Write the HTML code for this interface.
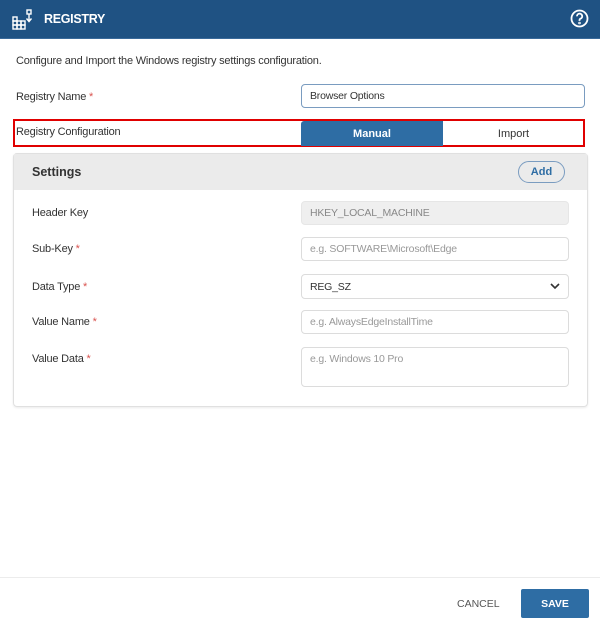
<!DOCTYPE html>
<html><head><style>
*{box-sizing:border-box;margin:0;padding:0}
body{width:600px;height:626px;background:#fff;font-family:"Liberation Sans",sans-serif;font-size:11px;color:#333;position:relative;overflow:hidden}
.a{position:absolute}
.hdr{left:0;top:0;width:600px;height:39px;background:#1f5283;border-bottom:1px solid #3a6a9a}
.lbl{font-size:11px;color:#333;letter-spacing:-0.2px}
.req{color:#d9534f}
.inp{border:1px solid #dcdcdc;border-radius:4px;background:#fff;font-size:10.5px;color:#999;padding-left:8px;display:flex;align-items:center;letter-spacing:-0.2px}
</style></head><body>
<div class="a hdr">
<svg class="a" style="left:11px;top:9px" width="24" height="22" viewBox="0 0 24 22" fill="none" stroke="#fff" stroke-width="1.4">
<rect x="2" y="8" width="4" height="4"/><rect x="2" y="12" width="4" height="4"/><rect x="6" y="12" width="4" height="4"/><rect x="10" y="12" width="4" height="4"/><rect x="2" y="16" width="4" height="4"/><rect x="6" y="16" width="4" height="4"/><rect x="10" y="16" width="4" height="4"/>
<rect x="16" y="1" width="4" height="4"/><path d="M18 5v7M15.5 9.5l2.5 3 2.5-3"/></svg>
<div class="a" style="left:44px;top:12px;color:#fff;font-weight:bold;font-size:12.5px;letter-spacing:-0.3px">REGISTRY</div>
<svg class="a" style="left:570px;top:9px" width="19" height="19" viewBox="0 0 19 19" fill="none" stroke="#fff" stroke-width="1.8"><circle cx="9.5" cy="9.5" r="8"/><path d="M7 7.3a2.6 2.6 0 1 1 3.4 2.4c-.6.3-.9.7-.9 1.4v.8"/><circle cx="9.5" cy="14" r=".4" fill="#fff"/></svg>
</div>
<div class="a lbl" style="left:16px;top:55px">Configure and Import the Windows registry settings configuration.</div>
<div class="a lbl" style="left:16px;top:91px">Registry Name <span class="req">*</span></div>
<div class="a inp" style="left:301px;top:84px;width:284px;height:24px;border-color:#7a9cc0;color:#333">Browser Options</div>
<div class="a" style="left:13px;top:119px;width:572px;height:28px;border:2px solid #e00000"></div>
<div class="a lbl" style="left:16px;top:126px">Registry Configuration</div>
<div class="a" style="left:301px;top:121px;width:142px;height:25px;background:#2e6da4;color:#fff;font-weight:bold;font-size:11px;display:flex;align-items:center;justify-content:center;border-radius:3px 0 0 0">Manual</div>
<div class="a" style="left:443px;top:121px;width:141px;height:25px;color:#333;font-size:11px;display:flex;align-items:center;justify-content:center">Import</div>
<div class="a" style="left:13px;top:153px;width:575px;height:254px;border:1px solid #e0e0e0;border-radius:4px;box-shadow:0 1px 2px rgba(0,0,0,.08)"></div>
<div class="a" style="left:14px;top:154px;width:573px;height:36px;background:#ebebeb"></div>
<div class="a" style="left:32px;top:165px;font-weight:bold;font-size:12.5px;color:#333">Settings</div>
<div class="a" style="left:518px;top:161px;width:47px;height:22px;border:1.5px solid #7a9cc0;border-radius:11px;color:#2e6da4;font-weight:bold;font-size:11px;display:flex;align-items:center;justify-content:center">Add</div>
<div class="a lbl" style="left:32px;top:207px">Header Key</div>
<div class="a inp" style="left:301px;top:201px;width:268px;height:24px;background:#efefef;border-color:#e6e6e6;color:#888">HKEY_LOCAL_MACHINE</div>
<div class="a lbl" style="left:32px;top:243px">Sub-Key <span class="req">*</span></div>
<div class="a inp" style="left:301px;top:237px;width:268px;height:24px">e.g. SOFTWARE\Microsoft\Edge</div>
<div class="a lbl" style="left:32px;top:281px">Data Type <span class="req">*</span></div>
<div class="a inp" style="left:301px;top:274px;width:268px;height:25px;color:#333">REG_SZ</div>
<svg class="a" style="left:550px;top:283px" width="10" height="7" viewBox="0 0 10 7" fill="none" stroke="#333" stroke-width="1.6"><path d="M1 1l4 4 4-4"/></svg>
<div class="a lbl" style="left:32px;top:316px">Value Name <span class="req">*</span></div>
<div class="a inp" style="left:301px;top:310px;width:268px;height:24px">e.g. AlwaysEdgeInstallTime</div>
<div class="a lbl" style="left:32px;top:353px">Value Data <span class="req">*</span></div>
<div class="a inp" style="left:301px;top:347px;width:268px;height:40px;align-items:flex-start;padding-top:5px">e.g. Windows 10 Pro</div>
<div class="a" style="left:0;top:577px;width:600px;height:1px;background:#ececec"></div>
<div class="a" style="left:457px;top:598px;font-size:10.5px;color:#555">CANCEL</div>
<div class="a" style="left:521px;top:589px;width:68px;height:29px;background:#2e6da4;border-radius:2px;color:#fff;font-weight:bold;font-size:10.5px;display:flex;align-items:center;justify-content:center">SAVE</div>
</body></html>
